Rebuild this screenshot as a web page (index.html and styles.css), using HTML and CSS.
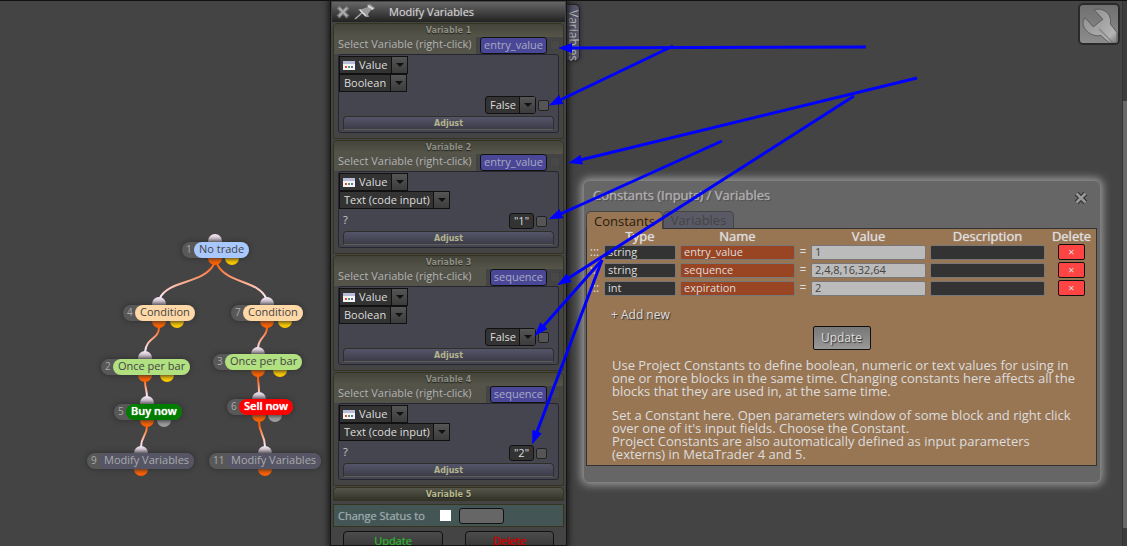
FILE: index.html
```html
<!DOCTYPE html>
<html lang="en">
<head>
<meta charset="utf-8">
<title>Modify Variables</title>
<link rel="stylesheet" href="styles.css">
</head>
<body>
<main class="workspace">
  <svg class="wires" width="330" height="546" aria-hidden="true">
    <defs>
      <linearGradient id="wire" gradientUnits="userSpaceOnUse" x1="0" y1="264" x2="0" y2="298"><stop offset="0" stop-color="#ff6010"/><stop offset="1" stop-color="#fbeefa"/></linearGradient>
      <linearGradient id="wire2" gradientUnits="userSpaceOnUse" x1="0" y1="328" x2="0" y2="350"><stop offset="0" stop-color="#ff6010"/><stop offset="1" stop-color="#fbeefa"/></linearGradient>
      <linearGradient id="wire3" gradientUnits="userSpaceOnUse" x1="0" y1="380" x2="0" y2="396"><stop offset="0" stop-color="#ff6010"/><stop offset="1" stop-color="#fbeefa"/></linearGradient>
      <linearGradient id="wire4" gradientUnits="userSpaceOnUse" x1="0" y1="426" x2="0" y2="446"><stop offset="0" stop-color="#ff6010"/><stop offset="1" stop-color="#fbeefa"/></linearGradient>
      <linearGradient id="cap" x1="0" y1="0" x2="0" y2="1"><stop offset="0" stop-color="#f6e8f6"/><stop offset=".6" stop-color="#c0b2c0"/></linearGradient>
    </defs>
    <g fill="none" stroke-width="2">
      <path stroke="url(#wire)" d="M214 264C204 284 168 280 160 298M217 264C227 284 258 280 266 298"/>
      <path stroke="url(#wire2)" d="M159 327C159 340 147 336 145 352M267 327C267 338 259 336 258 348"/>
      <path stroke="url(#wire3)" d="M145 381C145 388 147 390 147 397M258 376C258 383 259 385 259 392"/>
      <path stroke="url(#wire4)" d="M147 426C147 436 141 436 141 447M259 421C259 434 265 434 265 447"/>
    </g>
    <g fill="url(#cap)">
      <circle cx="215" cy="241" r="7"/><circle cx="159" cy="304" r="7"/><circle cx="267" cy="304" r="7"/>
      <circle cx="145" cy="358" r="7"/><circle cx="258" cy="354" r="7"/><circle cx="147" cy="403" r="7"/>
      <circle cx="259" cy="399" r="7"/><circle cx="141" cy="453" r="7"/><circle cx="265" cy="453" r="7"/>
    </g>
    <g fill="#ff6200">
      <circle cx="215" cy="258" r="7"/><circle cx="159" cy="321" r="7"/><circle cx="267" cy="321" r="7"/>
      <circle cx="145" cy="375" r="7"/><circle cx="258" cy="370" r="7"/><circle cx="147" cy="420" r="7"/>
      <circle cx="259" cy="415" r="7"/><circle cx="141" cy="469" r="7"/><circle cx="265" cy="469" r="7"/>
    </g>
    <g fill="#ffcc00">
      <circle cx="232" cy="258" r="7"/><circle cx="177" cy="321" r="7"/><circle cx="285" cy="321" r="7"/>
      <circle cx="167" cy="375" r="7"/><circle cx="280" cy="370" r="7"/>
    </g>
    <g fill="#a0a0a0"><circle cx="164" cy="420" r="7"/><circle cx="275" cy="415" r="7"/></g>
  </svg>

  <div class="node node-1"><span class="node-id">1</span><span class="node-name blue">No trade</span></div>
  <div class="node node-4"><span class="node-id">4</span><span class="node-name peach">Condition</span></div>
  <div class="node node-7"><span class="node-id">7</span><span class="node-name peach">Condition</span></div>
  <div class="node node-2"><span class="node-id">2</span><span class="node-name lime">Once per bar</span></div>
  <div class="node node-3"><span class="node-id">3</span><span class="node-name lime">Once per bar</span></div>
  <div class="node node-5"><span class="node-id">5</span><span class="node-name buy">Buy now</span></div>
  <div class="node node-6"><span class="node-id">6</span><span class="node-name sell">Sell now</span></div>
  <div class="node node-9"><span class="node-id">9</span><span class="node-name slate">Modify Variables</span></div>
  <div class="node node-11"><span class="node-id">11</span><span class="node-name slate">Modify Variables</span></div>

  <button class="wrench" type="button" aria-label="Settings">
    <svg viewBox="0 0 40 40" width="40" height="40">
      <defs><linearGradient id="steel" x1="0" y1="0" x2="1" y2="1"><stop offset="0" stop-color="#8c8c8c"/><stop offset=".5" stop-color="#a4a4a4"/><stop offset=".8" stop-color="#b4b4b4"/><stop offset="1" stop-color="#777"/></linearGradient></defs>
      <path d="M15 4C24 1 34 8 32 19L39 28V39H31L22 31C13 33 3 26 3 17L5 12L14 22L24 14Z" fill="url(#steel)" stroke="#5c5c5c" stroke-linejoin="round"/>
      <path d="M20 24L34 38" stroke="#777" stroke-width="2" opacity=".6"/>
    </svg>
  </button>
  <div class="scroll"><div class="thumb"></div></div>

  <aside class="side-tab">Variables</aside>
  <section class="panel">
    <header class="panel-title">
      <button class="plain" type="button" aria-label="Close"><svg width="14" height="14" viewBox="0 0 14 14"><path d="M2 2L12 12M12 2L2 12" stroke="#777" stroke-width="4"/><path d="M3 3L11 11M11 3L3 11" stroke="#aaa" stroke-width="2"/></svg></button>
      <button class="plain" type="button" aria-label="Pin"><svg width="22" height="16" viewBox="0 0 22 16"><path d="M1 15L9 8" stroke="#aaa" stroke-width="1.500"/><path d="M4 5L8 5L14 3L13 1L16 0L21 4L19 6L17 6L14 10L15 13L12 13Z" fill="#999"/><path d="M6 6L12 12M14 2L19 5" stroke="#ddd" stroke-width="1.500"/></svg></button>
      <h1>Modify Variables</h1>
    </header>

    <div class="variables">
      <section class="variable">
        <h2>Variable 1</h2>
        <div class="pick-row"><span class="pick-label">Select Variable (right-click)</span><button class="var-name" type="button">entry_value</button><input class="ghost" type="checkbox" aria-label="Link variable 1"></div>
        <div class="box">
          <div class="line"><span class="picker"><svg class="cal" width="12" height="9"><path d="M0 0H12V9H0Z" fill="#f4f4f4"/><path d="M0 0H12V3H0Z" fill="#b9bcd8"/><path d="M2 5h2v2H2z" fill="#e44"/><path d="M5 5h2v2H5z" fill="#4a4"/><path d="M8 5h2v2H8z" fill="#66d"/></svg><select aria-label="Source 1"><option>Value</option></select><i class="arrow"></i></span></div>
          <div class="line"><span class="picker"><select aria-label="Type 1"><option>Boolean</option></select><i class="arrow"></i></span></div>
          <div class="line value"><span class="picker round"><select aria-label="Value 1"><option>False</option></select><i class="arrow"></i></span><input class="tick" type="checkbox" aria-label="Use value 1"></div>
          <button class="adjust" type="button">Adjust</button>
        </div>
      </section>

      <section class="variable">
        <h2>Variable 2</h2>
        <div class="pick-row"><span class="pick-label">Select Variable (right-click)</span><button class="var-name" type="button">entry_value</button><input class="ghost" type="checkbox" aria-label="Link variable 2"></div>
        <div class="box text">
          <div class="line"><span class="picker"><svg class="cal" width="12" height="9"><path d="M0 0H12V9H0Z" fill="#f4f4f4"/><path d="M0 0H12V3H0Z" fill="#b9bcd8"/><path d="M2 5h2v2H2z" fill="#e44"/><path d="M5 5h2v2H5z" fill="#4a4"/><path d="M8 5h2v2H8z" fill="#66d"/></svg><select aria-label="Source 2"><option>Value</option></select><i class="arrow"></i></span></div>
          <div class="line"><span class="picker"><select aria-label="Type 2"><option>Text (code input)</option></select><i class="arrow"></i></span></div>
          <div class="line value"><label class="q" for="code2">?</label><input class="code" id="code2" type="text" value="&quot;1&quot;"><input class="tick" type="checkbox" aria-label="Use value 2"></div>
          <button class="adjust" type="button">Adjust</button>
        </div>
      </section>

      <section class="variable">
        <h2>Variable 3</h2>
        <div class="pick-row"><span class="pick-label">Select Variable (right-click)</span><button class="var-name" type="button">sequence</button><input class="ghost" type="checkbox" aria-label="Link variable 3"></div>
        <div class="box">
          <div class="line"><span class="picker"><svg class="cal" width="12" height="9"><path d="M0 0H12V9H0Z" fill="#f4f4f4"/><path d="M0 0H12V3H0Z" fill="#b9bcd8"/><path d="M2 5h2v2H2z" fill="#e44"/><path d="M5 5h2v2H5z" fill="#4a4"/><path d="M8 5h2v2H8z" fill="#66d"/></svg><select aria-label="Source 3"><option>Value</option></select><i class="arrow"></i></span></div>
          <div class="line"><span class="picker"><select aria-label="Type 3"><option>Boolean</option></select><i class="arrow"></i></span></div>
          <div class="line value"><span class="picker round"><select aria-label="Value 3"><option>False</option></select><i class="arrow"></i></span><input class="tick" type="checkbox" aria-label="Use value 3"></div>
          <button class="adjust" type="button">Adjust</button>
        </div>
      </section>

      <section class="variable">
        <h2>Variable 4</h2>
        <div class="pick-row"><span class="pick-label">Select Variable (right-click)</span><button class="var-name" type="button">sequence</button><input class="ghost" type="checkbox" aria-label="Link variable 4"></div>
        <div class="box text">
          <div class="line"><span class="picker"><svg class="cal" width="12" height="9"><path d="M0 0H12V9H0Z" fill="#f4f4f4"/><path d="M0 0H12V3H0Z" fill="#b9bcd8"/><path d="M2 5h2v2H2z" fill="#e44"/><path d="M5 5h2v2H5z" fill="#4a4"/><path d="M8 5h2v2H8z" fill="#66d"/></svg><select aria-label="Source 4"><option>Value</option></select><i class="arrow"></i></span></div>
          <div class="line"><span class="picker"><select aria-label="Type 4"><option>Text (code input)</option></select><i class="arrow"></i></span></div>
          <div class="line value"><label class="q" for="code4">?</label><input class="code" id="code4" type="text" value="&quot;2&quot;"><input class="tick" type="checkbox" aria-label="Use value 4"></div>
          <button class="adjust" type="button">Adjust</button>
        </div>
      </section>

      <section class="variable closed"><h2>Variable 5</h2></section>
    </div>

    <div class="status">
      <label for="status">Change Status to</label>
      <input id="status" class="status-tick" type="checkbox">
      <input class="status-text" type="text" aria-label="Status">
    </div>
    <div class="actions"><button class="go" type="button">Update</button><button class="del" type="button">Delete</button></div>
  </section>

  <section class="dialog">
    <header class="dialog-title">
      <h1>Constants (Inputs) / Variables</h1>
      <button class="plain" type="button" aria-label="Close dialog"><svg width="14" height="14" viewBox="0 0 14 14"><path d="M2.500 2.500L11.500 11.500M11.500 2.500L2.500 11.500" stroke="#333" stroke-width="5"/><path d="M2.500 2.500L11.500 11.500M11.500 2.500L2.500 11.500" stroke="#999" stroke-width="2.500"/></svg></button>
    </header>
    <nav class="tabs"><button class="tab active" type="button">Constants</button><button class="tab" type="button">Variables</button></nav>
    <div class="sheet">
      <table class="constants">
        <colgroup><col class="c-grip"><col class="c-type"><col><col class="c-eq"><col><col><col class="c-del"></colgroup>
        <thead><tr><th></th><th>Type</th><th>Name</th><th></th><th>Value</th><th>Description</th><th>Delete</th></tr></thead>
        <tbody>
          <tr><td class="grip">:::</td><td><input class="dark" value="string" aria-label="Type"></td><td><input class="rust" value="entry_value" aria-label="Name"></td><td class="eq">=</td><td><input class="light" value="1" aria-label="Value"></td><td><input class="dark" aria-label="Description"></td><td class="rm"><button type="button">×</button></td></tr>
          <tr><td class="grip">:::</td><td><input class="dark" value="string" aria-label="Type"></td><td><input class="rust" value="sequence" aria-label="Name"></td><td class="eq">=</td><td><input class="light" value="2,4,8,16,32,64" aria-label="Value"></td><td><input class="dark" aria-label="Description"></td><td class="rm"><button type="button">×</button></td></tr>
          <tr><td class="grip">:::</td><td><input class="dark" value="int" aria-label="Type"></td><td><input class="rust" value="expiration" aria-label="Name"></td><td class="eq">=</td><td><input class="light" value="2" aria-label="Value"></td><td><input class="dark" aria-label="Description"></td><td class="rm"><button type="button">×</button></td></tr>
        </tbody>
      </table>
      <button class="add" type="button">+ Add new</button>
      <button class="update" type="button">Update</button>
      <p>Use Project Constants to define boolean, numeric or text values for using in<br>one or more blocks in the same time. Changing constants here affects all the<br>blocks that they are used in, at the same time.</p>
      <p>Set a Constant here. Open parameters window of some block and right click<br>over one of it's input fields. Choose the Constant.<br>Project Constants are also automatically defined as input parameters<br>(externs) in MetaTrader 4 and 5.</p>
    </div>
  </section>

  <svg class="arrows" width="1127" height="546" aria-hidden="true">
    <defs><marker id="head" markerUnits="userSpaceOnUse" markerWidth="14" markerHeight="10" refX="6" refY="5" orient="auto"><path d="M0 0L14 5L0 10Z" fill="#00f"/></marker></defs>
    <g stroke="#00f" stroke-width="3">
      <path marker-end="url(#head)" d="M866 47L566 48"/>
      <path marker-end="url(#head)" d="M673 46L556 102"/>
      <path marker-end="url(#head)" d="M917 78L576 161"/>
      <path marker-end="url(#head)" d="M722 141L556 216"/>
      <path marker-end="url(#head)" d="M854 96L564 281"/>
      <path marker-end="url(#head)" d="M602 260L540 330"/>
      <path marker-end="url(#head)" d="M602 260L535 437"/>
    </g>
  </svg>
</main>
</body>
</html>
```

FILE: styles.css
```css
* { box-sizing: border-box; }
body { margin: 0; background: #444; font: 11px/16px "Open Sans", "Noto Sans", sans-serif; color: #ccc; }
button, input, select { font: inherit; color: inherit; margin: 0; padding: 0; }
h1, h2, p { margin: 0; font-weight: 400; }
.workspace { position: relative; height: 100vh; overflow: hidden; border-top: 1px solid #111; }
.wires, .arrows { position: absolute; left: 0; top: -1px; }
.arrows { z-index: 5; pointer-events: none; }
.plain { border: 0; background: none; display: flex; }

.node { position: absolute; display: flex; height: 16px; border-radius: 8px; background: #585858; box-shadow: 0 0 5px 1px #333; white-space: nowrap; }
.node-id { min-width: 12px; padding-left: 4px; font-size: 10px; line-height: 14px; color: #aaa; }
.node-name { padding: 0 5px; border-radius: 8px; line-height: 13px; color: #444; }
.blue { background: #a8c8ff; }
.peach { background: #ffd8a8; }
.lime { background: #b0e080; }
.buy { background: #007d00; color: #fff; font-weight: 600; text-shadow: 0 0 1px #fff; }
.sell { background: #f00; color: #fff; font-weight: 600; text-shadow: 0 0 1px #fff; }
.slate { background: #555566; color: #aaa; }
.node-1 { left: 182px; top: 241px; }
.node-4 { left: 123px; top: 304px; }
.node-7 { left: 231px; top: 304px; }
.node-2 { left: 101px; top: 358px; }
.node-3 { left: 213px; top: 353px; }
.node-5 { left: 114px; top: 403px; }
.node-6 { left: 227px; top: 398px; }
.node-9 { left: 87px; top: 452px; }
.node-11 { left: 209px; top: 452px; }
.node-11 .node-id { min-width: 17px; }

.wrench { position: absolute; right: 7px; top: 2px; width: 42px; height: 42px; border: 2px solid #2a2a2a; border-radius: 5px; background: linear-gradient(#707070, #8c8c8c); display: flex; overflow: hidden; }
.scroll { position: absolute; right: 0; top: 0; bottom: 0; width: 5px; padding-top: 100px; background: #3c3c3c; border-left: 1px solid #333; }
.thumb { height: 96%; max-height: 428px; background: #686868; }

.side-tab { position: absolute; left: 566px; top: 3px; height: 57px; width: 14px; padding-top: 5px; writing-mode: vertical-rl; font-size: 12px; line-height: 12px; border: 1px solid #222; border-left: 0; border-radius: 0 5px 5px 0; background: #55556a; color: #bbb; white-space: nowrap; box-shadow: 0 0 4px #222; }
.panel { position: absolute; left: 330px; top: -1px; bottom: 0; width: 237px; padding: 1px; overflow: hidden; border: 1px solid #151515; background: #444; box-shadow: 0 0 6px 2px #1c1c1c; }
.panel-title { display: flex; align-items: center; gap: 4px; height: 20px; padding-left: 4px; background: linear-gradient(#666, #222); }
.panel-title h1 { padding-left: 9px; font-size: 11px; line-height: 16px; text-shadow: 0 0 1px #999; }
.variables { display: flex; flex-direction: column; gap: 1px; padding: 1px 1px 0; }
.variable { border: 1px solid #34341f; border-radius: 4px 4px 0 0; padding-bottom: 5px; }
.variable h2 { height: 13px; font: 700 8px/13px "DejaVu Sans", sans-serif; text-align: center; color: #8f8f82; background: linear-gradient(#44443a, #55554a); border-radius: 4px 4px 0 0; text-shadow: 0 1px 1px #222; }
.variable.closed { padding: 0; }
.closed h2 { height: 12px; color: #b8b88a; background: linear-gradient(#55554a, #33332a); }
.pick-row { display: flex; height: 17px; padding-right: 3px; background: #444; }
.pick-label { flex: 1; margin-right: 4px; padding-left: 4px; line-height: 14px; color: #b2b2b2; background: #53534a; white-space: nowrap; }
.var-name { padding: 0 3px 2px; line-height: 12px; border: 1px solid #111; border-radius: 3px; background: #4a4896; color: #a9a9c4; }
.ghost { appearance: none; width: 10px; height: 10px; margin: 3px 0 0 3px; border: 1px solid #424242; background: #484848; border-radius: 2px; }
.box { display: flex; flex-direction: column; height: 79px; margin: 0 4px; padding: 1px 0 2px; border: 1px solid #262630; border-radius: 3px; background: #454550; }
.text { height: 77px; }
.line { display: flex; height: 18px; align-items: flex-start; }
.line:nth-child(2) { height: 19px; }
.picker { display: flex; height: 18px; align-items: center; border: 1px solid #111; background: #333; }
.picker select { appearance: none; border: 0; background: none; height: 16px; line-height: 16px; padding: 0 3px 0 4px; color: #ddd; }
.picker .cal { margin-left: 3px; }
.arrow { width: 16px; height: 16px; border-left: 1px solid #111; background: linear-gradient(#555, #3c3c3c); display: grid; place-items: center; }
.arrow::before { content: ""; border: 4px solid transparent; border-top: 4px solid #111; border-bottom: 0; }
.round { border-radius: 3px; }
.line.value { justify-content: flex-end; margin-top: 3px; padding-right: 9px; gap: 2px; }
.text .line.value { padding-right: 11px; }
.q { flex: 1; padding-left: 4px; line-height: 14px; }
.code { width: 25px; height: 16px; border: 1px solid #111; border-radius: 3px; background: #333; color: #ddd; text-align: center; }
.tick { appearance: none; width: 11px; height: 11px; margin-top: 4px; border: 1px solid #222; border-radius: 2px; background: #555; }
.text .tick { margin-top: 3px; }
.adjust { height: 14px; margin: auto 4px 0; border: 1px solid #2f2f2a; border-bottom: 1px dotted #66664a; border-radius: 4px 4px 0 0; background: linear-gradient(#55556a, #3c3c48); font: 700 8px/11px "DejaVu Sans", sans-serif; color: #b4b48c; }
.status { display: flex; align-items: center; height: 23px; margin: 3px 1px 0; padding-left: 4px; border: 1px solid #34341f; background: #445555; color: #99aaaa; text-shadow: 0 0 1px #899; }
.status-tick { appearance: none; width: 11px; height: 11px; margin-left: 15px; background: #fff; }
.status-text { width: 45px; height: 16px; margin-left: 8px; border: 1px solid #111; border-radius: 3px; background: #666; }
.actions { display: flex; justify-content: space-between; padding: 4px 11px; }
.actions button { width: 100px; height: 20px; line-height: 16px; border: 1px solid #111; border-radius: 4px; background: linear-gradient(#4c4c4c, #333); }
.actions .go { color: #3a3; text-shadow: 0 0 1px #3a3; }
.actions .del { width: 89px; color: #c00; text-shadow: 0 0 1px #c00; }

.dialog { position: absolute; left: 583px; right: 26px; top: 179px; padding: 0 3px 16px 2px; border-radius: 6px; border: 1px solid #808080; background: #666; box-shadow: 0 0 8px 2px #999; }
.dialog-title { display: flex; justify-content: space-between; height: 30px; padding: 6px 9px 0 7px; }
.dialog-title h1 { font-size: 13px; line-height: 16px; color: #aaa; text-shadow: 0 0 1px #bbb, 1px 1px 1px #444; white-space: nowrap; }
.dialog-title .plain { padding-top: 4px; }
.tabs { display: flex; height: 17px; }
.tab { padding: 0 7px; line-height: 14px; border: 1px solid #444; border-bottom: 0; border-radius: 5px 5px 0 0; background: #5a5a66; color: #444; font-size: 13px; }
.active { background: #987654; color: #2a1a0a; height: 18px; position: relative; }
.sheet { height: 238px; border: 1px solid #333; background: #987654; color: #ddd; }
.constants { width: 100%; table-layout: fixed; border-collapse: collapse; }
.c-grip { width: 15px; }
.c-type { width: 76px; }
.c-eq { width: 12px; }
.c-del { width: 49px; }
.constants th { height: 14px; padding: 0; font-size: 13px; line-height: 13px; font-weight: 400; text-shadow: 0 0 1px #ddd; white-space: nowrap; }
.constants td { height: 18px; padding: 0 2px; vertical-align: middle; line-height: 14px; }
.constants input { display: block; width: 100%; height: 15px; padding: 0 3px 1px; border: 1px solid #777; border-radius: 2px; font-size: 11px; }
.dark { background: #333; }
.rust { background: #994422; }
.constants .light { background: #bbb; color: #444; }
.constants .grip, .constants .eq { padding: 0; text-align: center; font-size: 12px; }
.constants .rm { text-align: center; }
.rm button { display: block; width: 27px; height: 16px; margin: 0 auto; line-height: 12px; border: 1px solid #111; border-radius: 2px; background: #f44; }
.add { display: block; margin: 10px 0 0 24px; border: 0; background: none; font-size: 12px; line-height: 16px; text-shadow: 1px 1px 1px #333; }
.update { display: block; width: 58px; height: 24px; margin: 3px auto 9px; border: 1px solid #111; border-radius: 2px; background: linear-gradient(#777, #999); text-shadow: 1px 1px 1px #333; font-size: 12px; }
.sheet p { margin: 0 0 11px 25px; font-size: 13px; line-height: 13px; white-space: nowrap; }
```
